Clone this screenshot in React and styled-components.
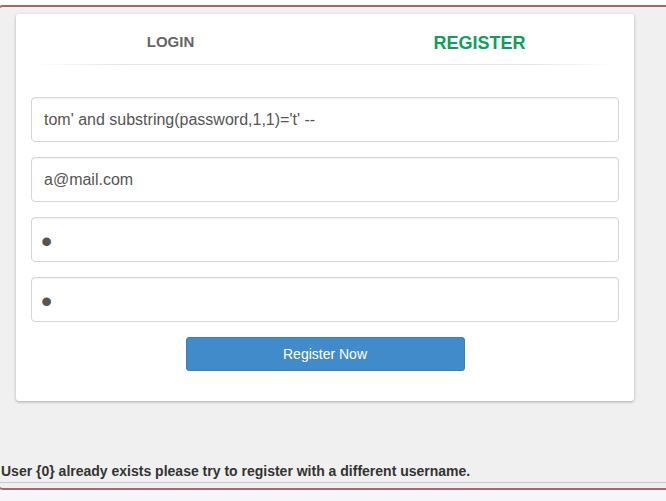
import React from "react";
import styled, { createGlobalStyle } from "styled-components";

const Global = createGlobalStyle`
  html, body {
    margin: 0;
    padding: 0;
    overflow: hidden;
    font-family: "Liberation Sans", Arial, sans-serif;
  }
  body {
    background: linear-gradient(#ffffff 0, #ffffff 5px, #f6f6fa 5px);
    min-height: 501px;
  }
`;

const Frame = styled.div`
  margin: 5px 0 0 -3px;
  width: calc(100% + 20px);
  height: 481px;
  border: 2px solid #b06565;
  border-radius: 6px;
  background: #f0f0f0;
  display: flex;
  flex-direction: column;
`;

const Card = styled.div`
  margin: 7px 0 0 17px;
  width: 618px;
  height: 387px;
  box-sizing: border-box;
  background: #fff;
  border-radius: 3px;
  box-shadow: 0 1px 3px rgba(0, 0, 0, 0.3);
  padding: 0 15px;
`;

const Tabs = styled.div`
  display: grid;
  grid-template-columns: 1fr 1fr;
  height: 51px;
  margin: 0 -15px;
  position: relative;
  &::after {
    content: "";
    position: absolute;
    left: 20px;
    right: 20px;
    bottom: 0;
    height: 1px;
    background: linear-gradient(to right, rgba(230,230,230,0), #e4e4e4 15%, #e4e4e4 85%, rgba(230,230,230,0));
  }
`;

const Tab = styled.div`
  display: flex;
  justify-content: center;
  align-items: flex-start;
  padding-top: 19px;
  font-weight: bold;
  font-size: ${p => (p.$active ? "18px" : "15px")};
  color: ${p => (p.$active ? "#0e9f5a" : "#666")};
`;

const Form = styled.form`
  display: flex;
  flex-direction: column;
  gap: 15px;
  padding-top: 32px;
`;

const Field = styled.input`
  box-sizing: border-box;
  width: 100%;
  height: 45px;
  border: 1px solid #d6d6d6;
  border-radius: 4px;
  padding: 0 12px;
  font-family: "Liberation Sans", Arial, sans-serif;
  font-size: 16px;
  color: #555;
  background: #fff;
  box-shadow: inset 0 1px 1px rgba(0, 0, 0, 0.05);
  outline: none;
  &[type="password"] {
    font-size: 32px;
    padding: 4px 0 0 9px;
  }
`;

const Submit = styled.button`
  align-self: center;
  width: 279px;
  height: 34px;
  border: 1px solid #3a7fbd;
  border-radius: 3px;
  background: #428bca;
  color: #fff;
  font-family: "Liberation Sans", Arial, sans-serif;
  font-size: 14px;
  cursor: pointer;
`;

const Message = styled.div`
  margin: auto 0 5px 0;
  padding: 0 0 3px 2px;
  border-bottom: 1px solid #c8c8c8;
  font-weight: bold;
  font-size: 14px;
  color: #333;
`;

export default function App() {
  return (
    <>
      <Global />
      <Frame>
        <Card>
          <Tabs>
            <Tab>LOGIN</Tab>
            <Tab $active>REGISTER</Tab>
          </Tabs>
          <Form onSubmit={e => e.preventDefault()}>
            <Field type="text" defaultValue="tom' and substring(password,1,1)='t' --" />
            <Field type="email" defaultValue="a@mail.com" />
            <Field type="password" defaultValue="a" />
            <Field type="password" defaultValue="a" />
            <Submit type="submit">Register Now</Submit>
          </Form>
        </Card>
        <Message>User {"{0}"} already exists please try to register with a different username.</Message>
      </Frame>
    </>
  );
}
